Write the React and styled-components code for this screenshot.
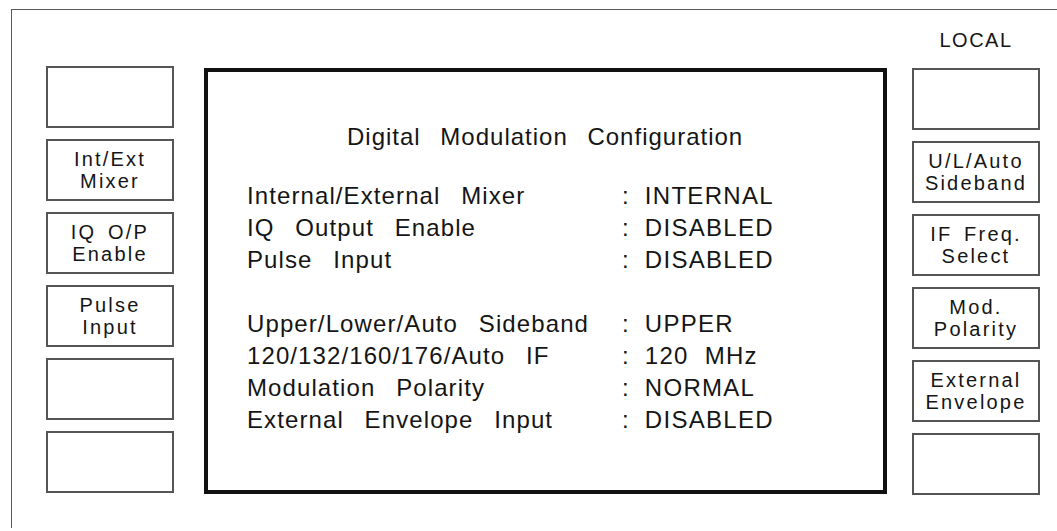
import styled, { createGlobalStyle } from "styled-components";

const GlobalStyle = createGlobalStyle`
  html, body {
    margin: 0;
    background: #ffffff;
  }
  body {
    font-family: "Liberation Sans", Arial, sans-serif;
    color: #151515;
  }
`;

const Frame = styled.div`
  margin: 9px 0 0 11px;
  height: 518px;
  border-top: 1px solid #5a5a5a;
  border-left: 1px solid #5a5a5a;
  padding-left: 34px;
`;

const Layout = styled.div`
  display: grid;
  grid-template-columns: 128px 1fr 128px;
  width: 994px;
`;

const Local = styled.div`
  grid-column: 3;
  margin-top: 20px;
  font-size: 20px;
  line-height: 20px;
  text-align: center;
  letter-spacing: 1.5px;
`;

const SoftKeys = styled.div`
  display: flex;
  flex-direction: column;
  gap: 11px;
  margin-top: ${(p) => p.$offset}px;
`;

const SoftKey = styled.div`
  box-sizing: border-box;
  height: 62px;
  border: 2px solid #555;
  display: flex;
  flex-direction: column;
  align-items: center;
  justify-content: center;
  font-size: 20px;
  line-height: 22px;
  letter-spacing: 2.2px;
  word-spacing: 4px;
`;

const Panel = styled.div`
  box-sizing: border-box;
  height: 426px;
  margin: 18px 25px 0 30px;
  border: 4px solid #111;
  padding: 53px 0 0 39px;
  font-size: 24px;
  letter-spacing: 1.1px;
  word-spacing: 13px;
`;

const Title = styled.div`
  line-height: 24px;
  padding-left: 100px;
  margin-bottom: 31px;
  letter-spacing: 1px;
  word-spacing: 12px;
`;

const Group = styled.div`
  display: grid;
  grid-template-columns: 360px auto 1fr;
  column-gap: 15px;
  line-height: 32px;
  margin-bottom: 32px;
`;

const Label = styled.span`
  white-space: nowrap;
`;

const Value = styled.span`
  white-space: nowrap;
  letter-spacing: 1.3px;
  word-spacing: 8px;
`;

const leftKeys = [
  [],
  ["Int/Ext", "Mixer"],
  ["IQ O/P", "Enable"],
  ["Pulse", "Input"],
  [],
  [],
];

const rightKeys = [
  [],
  ["U/L/Auto", "Sideband"],
  ["IF Freq.", "Select"],
  ["Mod.", "Polarity"],
  ["External", "Envelope"],
  [],
];

const groups = [
  [
    ["Internal/External Mixer", "INTERNAL"],
    ["IQ Output Enable", "DISABLED"],
    ["Pulse Input", "DISABLED"],
  ],
  [
    ["Upper/Lower/Auto Sideband", "UPPER"],
    ["120/132/160/176/Auto IF", "120 MHz"],
    ["Modulation Polarity", "NORMAL"],
    ["External Envelope Input", "DISABLED"],
  ],
];

function KeyColumn({ keys, offset }) {
  return (
    <SoftKeys $offset={offset}>
      {keys.map((lines, i) => (
        <SoftKey key={i}>
          {lines.map((l) => (
            <span key={l}>{l}</span>
          ))}
        </SoftKey>
      ))}
    </SoftKeys>
  );
}

export default function App() {
  return (
    <>
      <GlobalStyle />
      <Frame>
        <Layout>
          <Local>LOCAL</Local>
          <KeyColumn keys={leftKeys} offset={16} />
          <Panel>
            <Title>Digital Modulation Configuration</Title>
            {groups.map((rows, g) => (
              <Group key={g}>
                {rows.flatMap(([label, value]) => [
                  <Label key={label}>{label}</Label>,
                  <span key={label + ":"}>:</span>,
                  <Value key={label + "v"}>{value}</Value>,
                ])}
              </Group>
            ))}
          </Panel>
          <KeyColumn keys={rightKeys} offset={18} />
        </Layout>
      </Frame>
    </>
  );
}
